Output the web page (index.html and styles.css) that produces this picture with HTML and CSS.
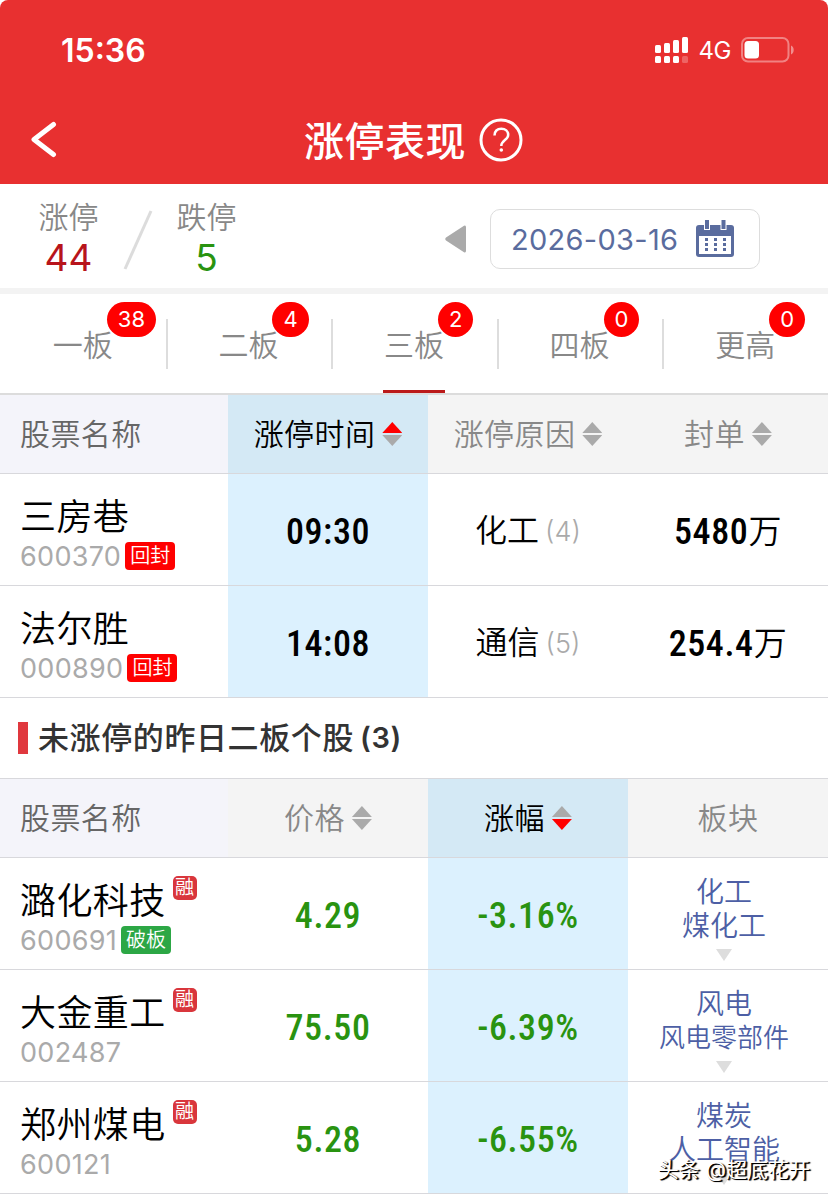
FILE: index.html
```html
<!DOCTYPE html>
<html lang="zh-CN">
<head>
    <meta charset="UTF-8">
    <meta name="viewport" content="width=device-width, initial-scale=1.0">
    <title>涨停表现</title>
    <link rel="stylesheet" href="styles.css">
</head>
<body>
    <header class="header">
        <div class="status-bar">
            <span class="clock">15:36</span>
            <div class="status-icons">
                <svg class="signal" width="34" height="27" viewBox="0 0 34 27" fill="#fff">
                    <rect x="0" y="8" width="6" height="8" rx="1.5"/>
                    <rect x="9" y="6" width="6" height="10" rx="1.5"/>
                    <rect x="18" y="3" width="6" height="13" rx="1.5"/>
                    <rect x="27" y="0" width="6" height="16" rx="1.5"/>
                    <rect x="0" y="19" width="6" height="7" rx="1.5"/>
                    <rect x="9" y="19" width="6" height="7" rx="1.5"/>
                    <rect x="18" y="19" width="6" height="7" rx="1.5"/>
                    <rect x="27" y="19" width="6" height="7" rx="1.5" opacity="0.25"/>
                </svg>
                <span class="network">4G</span>
                <svg class="battery" width="54" height="26" viewBox="0 0 54 26">
                    <rect x="1" y="1" width="46.5" height="23.5" rx="6" fill="none" stroke="#fff" stroke-width="2" opacity="0.4"/>
                    <rect x="3.5" y="4" width="14.5" height="17.5" rx="3.5" fill="#fff"/>
                    <path d="M50 8.5c3.6 1.4 3.6 7.6 0 9z" fill="#fff" opacity="0.45"/>
                </svg>
            </div>
        </div>
        <nav class="nav-bar">
            <svg class="back" width="26" height="38" viewBox="0 0 26 38">
                <path d="M22.5 3.5L3 18.500l19.500 15" fill="none" stroke="#fff" stroke-width="5" stroke-linecap="round" stroke-linejoin="round"/>
            </svg>
            <h1 class="nav-title">涨停表现</h1>
            <svg class="help" width="44" height="44" viewBox="0 0 44 44" fill="none" stroke="#fff">
                <circle cx="22" cy="22" r="20" stroke-width="3"/>
                <path d="M15.500 17.500c0-4.300 2.700-6.800 6.800-6.800s6.900 2.500 6.900 6.200c0 5-6.900 5.400-6.900 11" stroke-width="2.500"/>
                <circle cx="22.300" cy="32" r="1.800" fill="#fff" stroke="none"/>
            </svg>
        </nav>
    </header>

    <section class="summary">
        <div class="count">
            <span class="count-label">涨停</span>
            <span class="count-value up">44</span>
        </div>
        <svg class="slash" width="30" height="62" viewBox="0 0 30 62">
            <path d="M2 60L28 2" stroke="#dcdcdc" stroke-width="3"/>
        </svg>
        <div class="count">
            <span class="count-label">跌停</span>
            <span class="count-value down">5</span>
        </div>
        <svg class="prev" width="22" height="28" viewBox="0 0 22 28">
            <path d="M1 12.600L19 .8q2-1 2 1.500v23.400q0 2.500-2 1.500L1 15.400q-1.500-1.400 0-2.800z" fill="#aaa"/>
        </svg>
        <div class="date-picker">
            <span>2026-03-16</span>
            <svg width="40" height="38" viewBox="0 0 40 38">
                <path d="M4 5h32q3 0 3 3v26q0 3-3 3H4q-3 0-3-3V8q0-3 3-3z" fill="#5a6c9e"/>
                <path d="M4 16h32v18H4z" fill="#fff"/>
                <path d="M9 1h6v9H9zM25.500 1h6v9h-6z" fill="#fff"/>
                <path d="M10 0h4v9h-4zM26.500 0h4v9h-4z" fill="#5a6c9e"/>
                <path d="M10 18h3v3h-3zM19 18h3v3h-3zM28 18h3v3h-3zM10 23h3v3h-3zM19 23h3v3h-3zM28 23h3v3h-3zM10 28h3v3h-3zM19 28h3v3h-3zM28 28h3v3h-3z" fill="#5a6c9e"/>
            </svg>
        </div>
    </section>

    <div class="tabs">
        <div class="tab"><span class="tab-label">一板<i class="badge">38</i></span></div>
        <div class="tab"><span class="tab-label">二板<i class="badge">4</i></span></div>
        <div class="tab active"><span class="tab-label">三板<i class="badge">2</i></span></div>
        <div class="tab"><span class="tab-label">四板<i class="badge">0</i></span></div>
        <div class="tab"><span class="tab-label">更高<i class="badge">0</i></span></div>
    </div>

    <div class="table">
        <div class="row head">
            <div class="cell name">股票名称</div>
            <div class="cell sorted">涨停时间<span class="sort asc"></span></div>
            <div class="cell">涨停原因<span class="sort"></span></div>
            <div class="cell">封单<span class="sort"></span></div>
        </div>
        <div class="row">
            <div class="cell name">
                <div class="stock">三房巷</div>
                <div class="code">600370<span class="tag">回封</span></div>
            </div>
            <div class="cell sorted num">09:30</div>
            <div class="cell reason">化工<span class="times">(4)</span></div>
            <div class="cell num">5480<span class="unit">万</span></div>
        </div>
        <div class="row">
            <div class="cell name">
                <div class="stock">法尔胜</div>
                <div class="code">000890<span class="tag">回封</span></div>
            </div>
            <div class="cell sorted num">14:08</div>
            <div class="cell reason">通信<span class="times">(5)</span></div>
            <div class="cell num">254.4<span class="unit">万</span></div>
        </div>
    </div>

    <h2 class="section-title">未涨停的昨日二板个股<span class="total">(3)</span></h2>

    <div class="table">
        <div class="row head">
            <div class="cell name">股票名称</div>
            <div class="cell">价格<span class="sort"></span></div>
            <div class="cell sorted">涨幅<span class="sort desc"></span></div>
            <div class="cell">板块</div>
        </div>
        <div class="row">
            <div class="cell name">
                <div class="stock">潞化科技<span class="margin">融</span></div>
                <div class="code">600691<span class="tag broken">破板</span></div>
            </div>
            <div class="cell num fall">4.29</div>
            <div class="cell sorted num fall">-3.16%</div>
            <div class="cell sector"><span class="main">化工</span><span>煤化工</span><i class="more"></i></div>
        </div>
        <div class="row">
            <div class="cell name">
                <div class="stock">大金重工<span class="margin">融</span></div>
                <div class="code">002487</div>
            </div>
            <div class="cell num fall">75.50</div>
            <div class="cell sorted num fall">-6.39%</div>
            <div class="cell sector"><span class="main">风电</span><span class="long">风电零部件</span><i class="more"></i></div>
        </div>
        <div class="row">
            <div class="cell name">
                <div class="stock">郑州煤电<span class="margin">融</span></div>
                <div class="code">600121</div>
            </div>
            <div class="cell num fall">5.28</div>
            <div class="cell sorted num fall">-6.55%</div>
            <div class="cell sector"><span class="main">煤炭</span><span>人工智能</span><i class="more"></i></div>
        </div>
    </div>

    <div class="watermark">头条 @超底花开</div>
</body>
</html>
```
FILE: styles.css
```css
* {
    box-sizing: border-box;
}
body {
    position: relative;
    margin: 0;
    width: 828px;
    height: 1199px;
    overflow: hidden;
    background: #fff;
    color: #000;
    font-family: Inter, "Noto Sans CJK SC", sans-serif;
    font-size: 30px;
}
i {
    font-style: normal;
}

/* header */
.header {
    height: 184px;
    background: #e83030;
    color: #fff;
    border-radius: 8px 8px 0 0;
}
.status-bar {
    height: 96px;
    padding: 4px 34px 0 61px;
    display: flex;
    align-items: center;
    justify-content: space-between;
}
.clock {
    font-size: 32px;
    font-weight: 600;
}
.status-icons {
    display: flex;
    align-items: center;
}
.network {
    margin: 1px 10px 0 10px;
    font-size: 24px;
    letter-spacing: -0.5px;
}
.battery {
    margin-right: -1px;
}
.nav-bar {
    height: 88px;
    padding-left: 31px;
    display: flex;
    align-items: center;
}
.nav-title {
    margin: 4px 13px 0 247px;
    font-size: 40px;
    font-weight: 500;
    letter-spacing: 0.5px;
    line-height: 84px;
}

/* summary */
.summary {
    height: 110px;
    border-bottom: 6px solid #f3f3f3;
    display: flex;
    align-items: center;
    padding-left: 38px;
}
.count {
    width: 61px;
    display: flex;
    flex-direction: column;
    align-items: center;
    padding-top: 7px;
}
.count-label {
    color: #888;
    font-weight: 350;
    line-height: 36px;
}
.count-value {
    font-size: 37px;
    line-height: 45px;
}
.up {
    color: #b8141b;
}
.down {
    color: #299310;
}
.slash {
    margin: 7px 23px 0 24px;
}
.prev {
    margin: 5px 23px 0 208px;
}
.date-picker {
    width: 270px;
    height: 60px;
    margin-top: 6px;
    padding: 0 24px 0 20px;
    border: 1px solid #ddd;
    border-radius: 10px;
    color: #5a6c9e;
    font-size: 29px;
    letter-spacing: 0.3px;
    display: flex;
    align-items: center;
    justify-content: space-between;
}

/* tabs */
.tabs {
    height: 101px;
    border-bottom: 2px solid #dcdcdc;
    display: flex;
}
.tab {
    position: relative;
    flex: 1;
    text-align: center;
    color: #888;
    font-weight: 350;
    line-height: 103px;
}
.tab + .tab::before {
    content: "";
    position: absolute;
    left: 0;
    top: 25px;
    width: 2px;
    height: 50px;
    background: #ddd;
}
.tab.active::after {
    content: "";
    position: absolute;
    left: 52px;
    bottom: 0;
    width: 62px;
    height: 3px;
    background: #bb1a1a;
}
.tab-label {
    position: relative;
}
.badge {
    position: absolute;
    left: 54px;
    top: -25px;
    min-width: 35px;
    height: 35px;
    padding: 0 11px;
    border-radius: 18px;
    background: #f00;
    color: #fff;
    font-size: 22px;
    font-weight: 400;
    line-height: 35px;
}

/* tables */
.row {
    height: 112px;
    border-bottom: 1px solid #d8d8dc;
    display: grid;
    grid-template-columns: 228px 200px 200px 200px;
}
.cell {
    display: flex;
    align-items: center;
    justify-content: center;
}
.head {
    height: 79px;
    background: #f4f4f4;
    color: #888;
    font-weight: 350;
    letter-spacing: 0.4px;
    line-height: 78px;
}
.sorted {
    background: #dcf1fe;
}
.head .sorted {
    background: #d4e9f5;
    color: #000;
}
.head .name {
    background: #f4f4fa;
    color: #666;
}
.name {
    flex-direction: column;
    align-items: flex-start;
    padding-left: 20px;
}
.row .name {
    justify-content: center;
}
.stock {
    display: flex;
    font-size: 36px;
    font-weight: 350;
    letter-spacing: 0.4px;
    line-height: 44px;
    margin-top: 6px;
}
.code {
    display: flex;
    align-items: center;
    height: 28px;
    margin-top: 3px;
    color: #aaa;
    font-size: 27px;
    font-weight: 400;
    letter-spacing: 0.3px;
}
.tag {
    width: 50px;
    height: 28px;
    margin-left: 4px;
    border-radius: 4px;
    background: #f00;
    color: #fff;
    font-size: 20px;
    font-weight: 350;
    letter-spacing: 0;
    line-height: 29px;
    text-align: center;
}
.tag.broken {
    background: #2ca745;
}
.margin {
    width: 24px;
    height: 24px;
    margin: -3px 0 0 7px;
    border-radius: 5px;
    background: #d9363c;
    color: #fff;
    font-size: 19px;
    font-weight: 400;
    letter-spacing: 0;
    line-height: 24px;
    text-align: center;
}
.num {
    font-family: Roboto, "Noto Sans CJK SC", sans-serif;
    font-size: 36px;
    font-weight: 500;
    font-stretch: 87%;
    letter-spacing: 0.6px;
    padding-top: 4px;
}
.unit {
    margin-top: -6px;
    font-size: 33px;
    font-weight: 350;
}
.fall {
    color: #299310;
}
.reason {
    font-size: 32px;
    font-weight: 350;
    padding-bottom: 3px;
}
.times {
    margin: 7px 0 0 6px;
    color: #aaa;
    font-size: 27px;
    font-weight: 350;
}
.sort {
    width: 20px;
    margin-left: 7px;
    display: flex;
    flex-direction: column;
    gap: 2px;
}
.sort::before,
.sort::after {
    content: "";
    height: 11px;
    background: #aaa;
    clip-path: polygon(50% 0, 100% 100%, 0 100%);
}
.sort::after {
    clip-path: polygon(0 0, 100% 0, 50% 100%);
}
.asc::before,
.desc::after {
    background: #f00;
}
.section-title {
    height: 81px;
    margin: 0;
    padding-left: 18px;
    border-bottom: 1px solid #d8d8dc;
    display: flex;
    align-items: center;
    color: #333;
    font-size: 31px;
    font-weight: 500;
    letter-spacing: 0.6px;
    line-height: 80px;
}
.section-title::before {
    content: "";
    width: 10px;
    height: 32px;
    margin-right: 10px;
    background: #e0383e;
}
.total {
    margin: 0 0 0 6px;
    font-size: 29px;
    font-weight: 600;
}
.sector {
    flex-direction: column;
    justify-content: flex-start;
    padding: 17px 8px 0 0;
    color: #4d5fa5;
    font-size: 28px;
    font-weight: 350;
    line-height: 34px;
}
.sector .long {
    font-size: 26px;
}
.more {
    width: 16px;
    height: 12px;
    margin-top: 6px;
    background: #ddd;
    clip-path: polygon(0 0, 100% 0, 50% 100%);
}

.watermark {
    position: absolute;
    right: 18px;
    bottom: 14px;
    color: #fff;
    font-size: 21px;
    line-height: 30px;
    text-shadow: 1px 1px 0 #000, 2px 1px 1px #000;
}
```
